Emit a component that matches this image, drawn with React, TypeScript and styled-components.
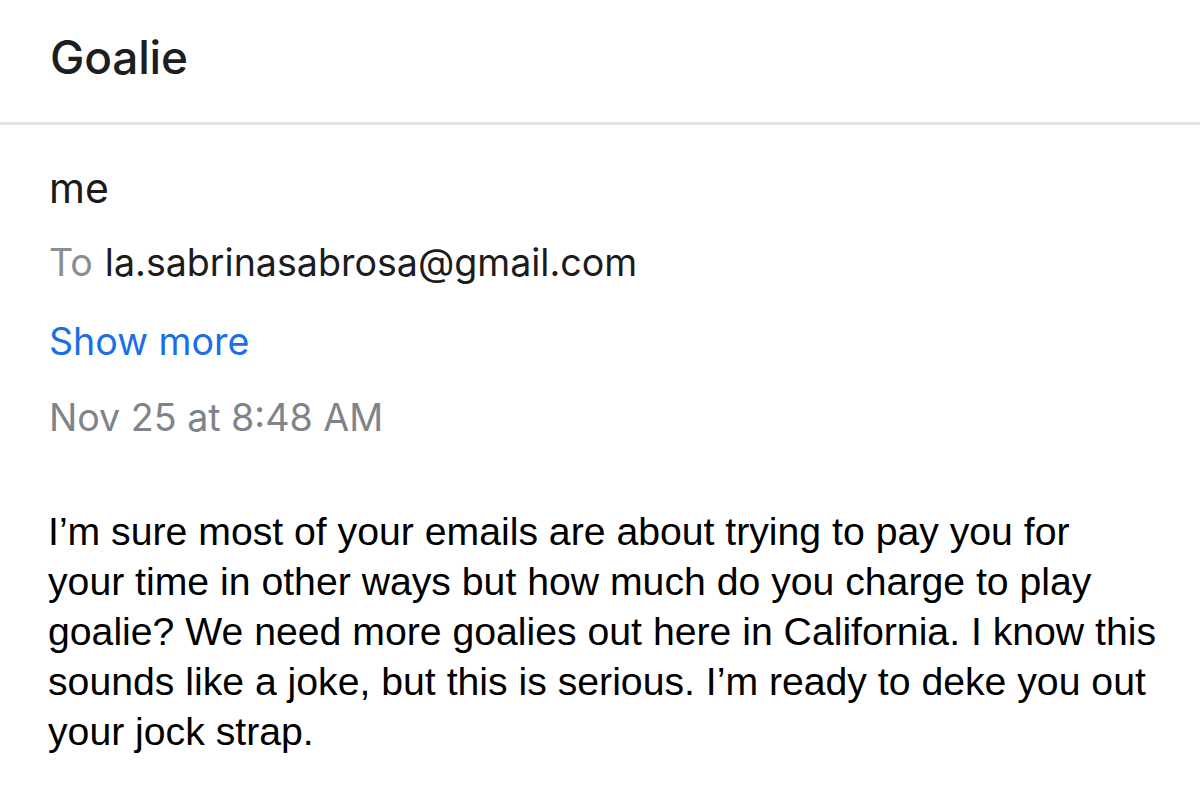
import React from "react";
import styled, { createGlobalStyle } from "styled-components";

const GlobalStyle = createGlobalStyle`
  html, body {
    margin: 0;
    padding: 0;
    background: #ffffff;
  }
  body {
    font-family: Inter, "Liberation Sans", Arial, sans-serif;
    -webkit-font-smoothing: antialiased;
  }
`;

const Page = styled.div`
  width: 1200px;
  min-height: 804px;
  background: #ffffff;
  overflow: hidden;
`;

const Header = styled.header`
  height: 114px;
  padding: 0 50px 8px 50px;
  border-bottom: 3px solid #e3e4e6;
  display: flex;
  align-items: center;
`;

const Title = styled.h1`
  margin: 0;
  font-family: Inter, "Liberation Sans", sans-serif;
  font-weight: 500;
  font-size: 46px;
  line-height: 114px;
  color: #1c1e22;
  letter-spacing: -0.2px;
`;

const Meta = styled.section`
  padding: 26px 50px 0 49px;
  display: flex;
  flex-direction: column;
`;

const Row = styled.div<{ $size?: number; $lh?: number; $mt?: number; $color?: string }>`
  font-family: Inter, "Liberation Sans", sans-serif;
  font-size: ${(p) => p.$size ?? 37.6}px;
  line-height: ${(p) => p.$lh ?? 76}px;
  margin-top: ${(p) => p.$mt ?? 0}px;
  color: ${(p) => p.$color ?? "#1c1c1e"};
  white-space: nowrap;
`;

const Label = styled.span`
  color: #8a8d93;
  margin-right: 12px;
`;

const Address = styled.span`
  color: #1c1c1e;
`;

const LinkButton = styled.a`
  color: #1a6fe6;
  text-decoration: none;
  cursor: pointer;
`;

const Body = styled.div`
  margin: 51px 0 0 0;
  padding: 0 40px 0 48px;
  font-family: "Liberation Sans", Arial, Helvetica, sans-serif;
  font-size: 39.2px;
  line-height: 50px;
  color: #000000;
`;

const Line = styled.span`
  display: block;
  white-space: nowrap;
`;

const bodyLines = [
  "I’m sure most of your emails are about trying to pay you for",
  "your time in other ways but how much do you charge to play",
  "goalie? We need more goalies out here in California. I know this",
  "sounds like a joke, but this is serious. I’m ready to deke you out",
  "your jock strap.",
];

export default function App() {
  return (
    <Page>
      <GlobalStyle />
      <Header>
        <Title>Goalie</Title>
      </Header>
      <Meta>
        <Row $size={41} $lh={74} $color="#1a1a1a">me</Row>
        <Row>
          <Label>To</Label>
          <Address>la.sabrinasabrosa@gmail.com</Address>
        </Row>
        <Row $mt={3}>
          <LinkButton>Show more</LinkButton>
        </Row>
        <Row $color="#7f838a">Nov 25 at 8:48 AM</Row>
      </Meta>
      <Body>
        {bodyLines.map((l, i) => (
          <Line key={i}>{l}</Line>
        ))}
      </Body>
    </Page>
  );
}
